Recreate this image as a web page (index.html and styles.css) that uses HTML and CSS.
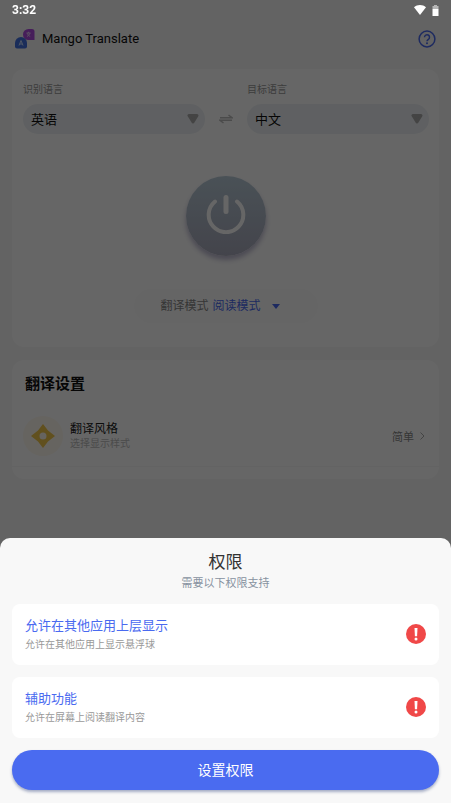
FILE: index.html
```html
<!DOCTYPE html>
<html lang="zh-CN">
<head>
<meta charset="utf-8">
<meta name="viewport" content="width=device-width, initial-scale=1">
<title>Mango Translate</title>
<link rel="stylesheet" href="styles.css">
</head>
<body>
<div class="status">
  <span>3:32</span>
  <span class="status-icons">
    <svg width="12" height="10" viewBox="0 0 12 10" aria-hidden="true"><path d="M0 2.2C3.4-.6 8.600-.6 12 2.200L6 10z" fill="#fff"/></svg>
    <svg width="7" height="11" viewBox="0 0 7 11" aria-hidden="true"><path d="M2 0h3v1h1.500v3h-6V1H2z" fill="#b5b5b5"/><path d="M.5 4h6v7h-6z" fill="#fff"/></svg>
  </span>
</div>

<div class="app">
  <header class="header">
    <svg width="20" height="20" viewBox="0 0 20 20" aria-hidden="true">
      <path d="M13.500 0H17a2.500 2.500 0 0 1 2.500 2.500V11h-6a5.500 5.500 0 0 1 0-11z" fill="#b04ae0"/>
      <path d="M11.500 4h4M13.500 2.800V4M15 4c-.4 1.500-1.500 2.700-3 3.500M12.200 4.200c.5 1.400 1.500 2.600 3 3.300" fill="none" stroke="#e4c8f5" stroke-width="1"/>
      <path d="M6 8a6 6 0 0 1 6 6v3.500a2 2 0 0 1-2 2H2a2 2 0 0 1-2-2V14a6 6 0 0 1 6-6z" fill="#4272e0"/>
      <path d="M4 16.500l2-5 2 5M4.800 15h2.400" fill="none" stroke="#c8dcff" stroke-width="1"/>
    </svg>
    <h1>Mango Translate</h1>
    <button class="plain help" type="button" aria-label="帮助">
      <svg width="18" height="18" viewBox="0 0 18 18" aria-hidden="true"><circle cx="9" cy="9" r="7.900" fill="none" stroke="#4a6af0" stroke-width="1.500"/><path d="M6.500 7.200a2.500 2.500 0 1 1 3.900 2.100C9.400 10 9 10.300 9 11.300" fill="none" stroke="#4a6af0" stroke-width="1.500"/><circle cx="9" cy="13.300" r="1" fill="#4a6af0"/></svg>
    </button>
  </header>

  <main class="content">
    <section class="card translate">
      <div class="languages">
        <div class="field">
          <label for="source">识别语言</label>
          <div class="select">
            <select id="source"><option>英语</option></select>
            <svg width="12" height="10" viewBox="0 0 12 10" aria-hidden="true"><path d="M2 1.500h8L6 8z" fill="#aaa" stroke="#aaa" stroke-width="3" stroke-linejoin="round"/></svg>
          </div>
        </div>
        <button class="plain swap" type="button" aria-label="交换语言">
          <svg width="14" height="10" viewBox="0 0 14 10" aria-hidden="true"><path d="M1 3.700h12L9.500 1M13 6.300H1L4.500 9" fill="none" stroke="#bbb" stroke-width="1.500"/></svg>
        </button>
        <div class="field">
          <label for="target">目标语言</label>
          <div class="select">
            <select id="target"><option>中文</option></select>
            <svg width="12" height="10" viewBox="0 0 12 10" aria-hidden="true"><path d="M2 1.500h8L6 8z" fill="#aaa" stroke="#aaa" stroke-width="3" stroke-linejoin="round"/></svg>
          </div>
        </div>
      </div>
      <button class="plain power" type="button" aria-label="开始翻译">
        <svg width="40" height="40" viewBox="0 0 40 40" aria-hidden="true"><path d="M9 7.500a17.300 17.300 0 1 0 22 0" fill="none" stroke="#fff" stroke-width="4" stroke-linecap="round"/><path d="M20 3.500v14" stroke="#fff" stroke-width="5" stroke-linecap="round"/></svg>
      </button>
      <div class="mode">
        <label for="mode">翻译模式</label>
        <select id="mode"><option>阅读模式</option></select>
        <svg width="8" height="5" viewBox="0 0 8 5" aria-hidden="true"><path d="M0 0h8L4 5z" fill="#4a6af0"/></svg>
      </div>
    </section>

    <section class="card settings">
      <h2>翻译设置</h2>
      <a class="row" href="#style">
        <span class="badge"><svg width="24" height="24" viewBox="0 0 24 24" aria-hidden="true"><path fill-rule="evenodd" d="M12 0l5 6.500L24 12l-7 5.500L12 24l-5-6.500L0 12l7-5.500zM12 8.500a3.500 3.500 0 1 0 0 7 3.500 3.500 0 0 0 0-7z" fill="#f2c84c"/></svg></span>
        <span class="text"><span class="name">翻译风格</span><span class="note">选择显示样式</span></span>
        <span class="value">简单</span>
        <svg width="5" height="8" viewBox="0 0 5 8" aria-hidden="true"><path d="M.5.500L4 4 .5 7.500" fill="none" stroke="#aaa"/></svg>
      </a>
    </section>
  </main>
</div>

<div class="scrim"></div>

<section class="sheet" role="dialog" aria-labelledby="sheet-title">
  <h2 id="sheet-title">权限</h2>
  <p class="intro">需要以下权限支持</p>
  <div class="permission">
    <div><h3>允许在其他应用上层显示</h3><p>允许在其他应用上显示悬浮球</p></div>
    <svg width="20" height="20" viewBox="0 0 20 20" role="img" aria-label="未授权"><circle cx="10" cy="10" r="10" fill="#f04848"/><path d="M8.500 4h3l-.4 8.200H8.900z" fill="#fff"/><circle cx="10" cy="15" r="1.500" fill="#fff"/></svg>
  </div>
  <div class="permission">
    <div><h3>辅助功能</h3><p>允许在屏幕上阅读翻译内容</p></div>
    <svg width="20" height="20" viewBox="0 0 20 20" role="img" aria-label="未授权"><circle cx="10" cy="10" r="10" fill="#f04848"/><path d="M8.500 4h3l-.4 8.200H8.900z" fill="#fff"/><circle cx="10" cy="15" r="1.500" fill="#fff"/></svg>
  </div>
  <button class="submit" type="button">设置权限</button>
</section>
</body>
</html>
```

FILE: styles.css
```css
* {
  box-sizing: border-box;
}

body {
  margin: 0;
  background: #f7f7f7;
  color: #111;
  font-family: Roboto, "Noto Sans CJK SC", sans-serif;
  font-size: 13px;
}

h1, h2, h3, p {
  margin: 0;
  font-weight: 400;
}

svg {
  display: block;
  flex: none;
}

select, button {
  font: inherit;
}

select {
  appearance: none;
  border: 0;
  margin: 0;
  background: transparent;
}

.plain {
  display: flex;
  align-items: center;
  justify-content: center;
  border: 0;
  padding: 0;
  background: none;
}

/* The status bar stays bright above the scrim. */
.status {
  position: fixed;
  z-index: 3;
  top: 0;
  left: 0;
  right: 0;
  display: flex;
  align-items: center;
  justify-content: space-between;
  height: 20px;
  padding: 0 12px;
  color: #fff;
  font-size: 12px;
  font-weight: 700;
}

.status-icons {
  display: flex;
  align-items: center;
  gap: 6px;
}

.app {
  padding-top: 20px;
}

.header {
  display: flex;
  align-items: center;
  height: 37px;
  padding: 0 15px;
  gap: 7px;
}

.header h1 {
  font-size: 13px;
}

.help {
  margin-left: auto;
}

.content {
  display: flex;
  flex-direction: column;
  gap: 13px;
  padding: 12px;
}

.card {
  border-radius: 12px;
  background: #fff;
}

.translate {
  display: flex;
  flex-direction: column;
  align-items: center;
  padding: 13px 10px 24px 11px;
}

.languages {
  display: flex;
  align-items: flex-end;
  align-self: stretch;
}

.field {
  flex: 1;
}

.field label {
  display: block;
  margin-bottom: 6px;
  color: #999;
  font-size: 10px;
  line-height: 16px;
}

.select {
  display: flex;
  align-items: center;
  padding-right: 6px;
  border-radius: 15px;
  background: #edf1f5;
}

.select select {
  flex: 1;
  height: 30px;
  padding: 0 8px;
  color: #111;
}

.swap {
  width: 42px;
  height: 30px;
}

.power {
  width: 80px;
  height: 80px;
  margin: 42px 0 33px;
  padding-bottom: 4px;
  border-radius: 50%;
  background: linear-gradient(#b8cbd8, #a9aabc);
  box-shadow: 0 4px 5px rgba(140, 135, 175, 0.6);
}

.mode {
  display: flex;
  align-items: center;
  height: 34px;
  padding: 0 38px 0 26px;
  border-radius: 17px;
  background: #fdfdfd;
  font-size: 12px;
}

.mode label {
  color: #888;
  line-height: 18px;
}

.mode select {
  height: 20px;
  padding: 0 10px 0 4px;
  color: #4a6af0;
}

.settings {
  padding-bottom: 12px;
}

.settings h2 {
  padding: 13px 13px 11px;
  font-size: 15px;
  font-weight: 700;
  line-height: 22px;
}

.row {
  display: flex;
  align-items: center;
  height: 61px;
  padding: 0 14px 0 11px;
  border-bottom: 1px solid #f7f7f7;
  color: #222;
  text-decoration: none;
}

.badge {
  display: grid;
  place-items: center;
  width: 40px;
  height: 40px;
  border-radius: 50%;
  background: #fffaf0;
}

.text {
  display: flex;
  flex: 1;
  flex-direction: column;
  padding-left: 7px;
}

.name {
  font-size: 12px;
  line-height: 16px;
}

.note {
  color: #bbb;
  font-size: 10px;
  line-height: 14px;
}

.value {
  margin-right: 6px;
  color: #888;
  font-size: 11px;
}

.scrim {
  position: fixed;
  z-index: 1;
  inset: 0;
  background: rgba(0, 0, 0, 0.6);
}

.sheet {
  position: fixed;
  z-index: 2;
  left: 0;
  right: 0;
  bottom: 0;
  display: flex;
  flex-direction: column;
  padding: 12px 12px 13px;
  border-radius: 10px 10px 0 0;
  background: #f8f8f8;
  text-align: center;
}

.sheet h2 {
  color: #333;
  font-size: 17px;
  line-height: 24px;
}

.intro {
  margin-bottom: 10px;
  color: #8792a0;
  font-size: 11px;
  line-height: 20px;
}

.permission {
  display: flex;
  align-items: center;
  justify-content: space-between;
  margin-bottom: 12px;
  padding: 11px 13px 12px;
  border-radius: 8px;
  background: #fff;
  text-align: left;
}

.permission h3 {
  color: #4a6af0;
  font-size: 13px;
  line-height: 22px;
}

.permission p {
  color: #999;
  font-size: 10px;
  line-height: 16px;
}

.submit {
  height: 40px;
  border: 0;
  border-radius: 20px;
  padding: 0 0 2px;
  background: #4a6bf0;
  box-shadow: 0 2px 3px rgba(40, 60, 120, 0.4);
  color: #fff;
  font-size: 14px;
}
```
